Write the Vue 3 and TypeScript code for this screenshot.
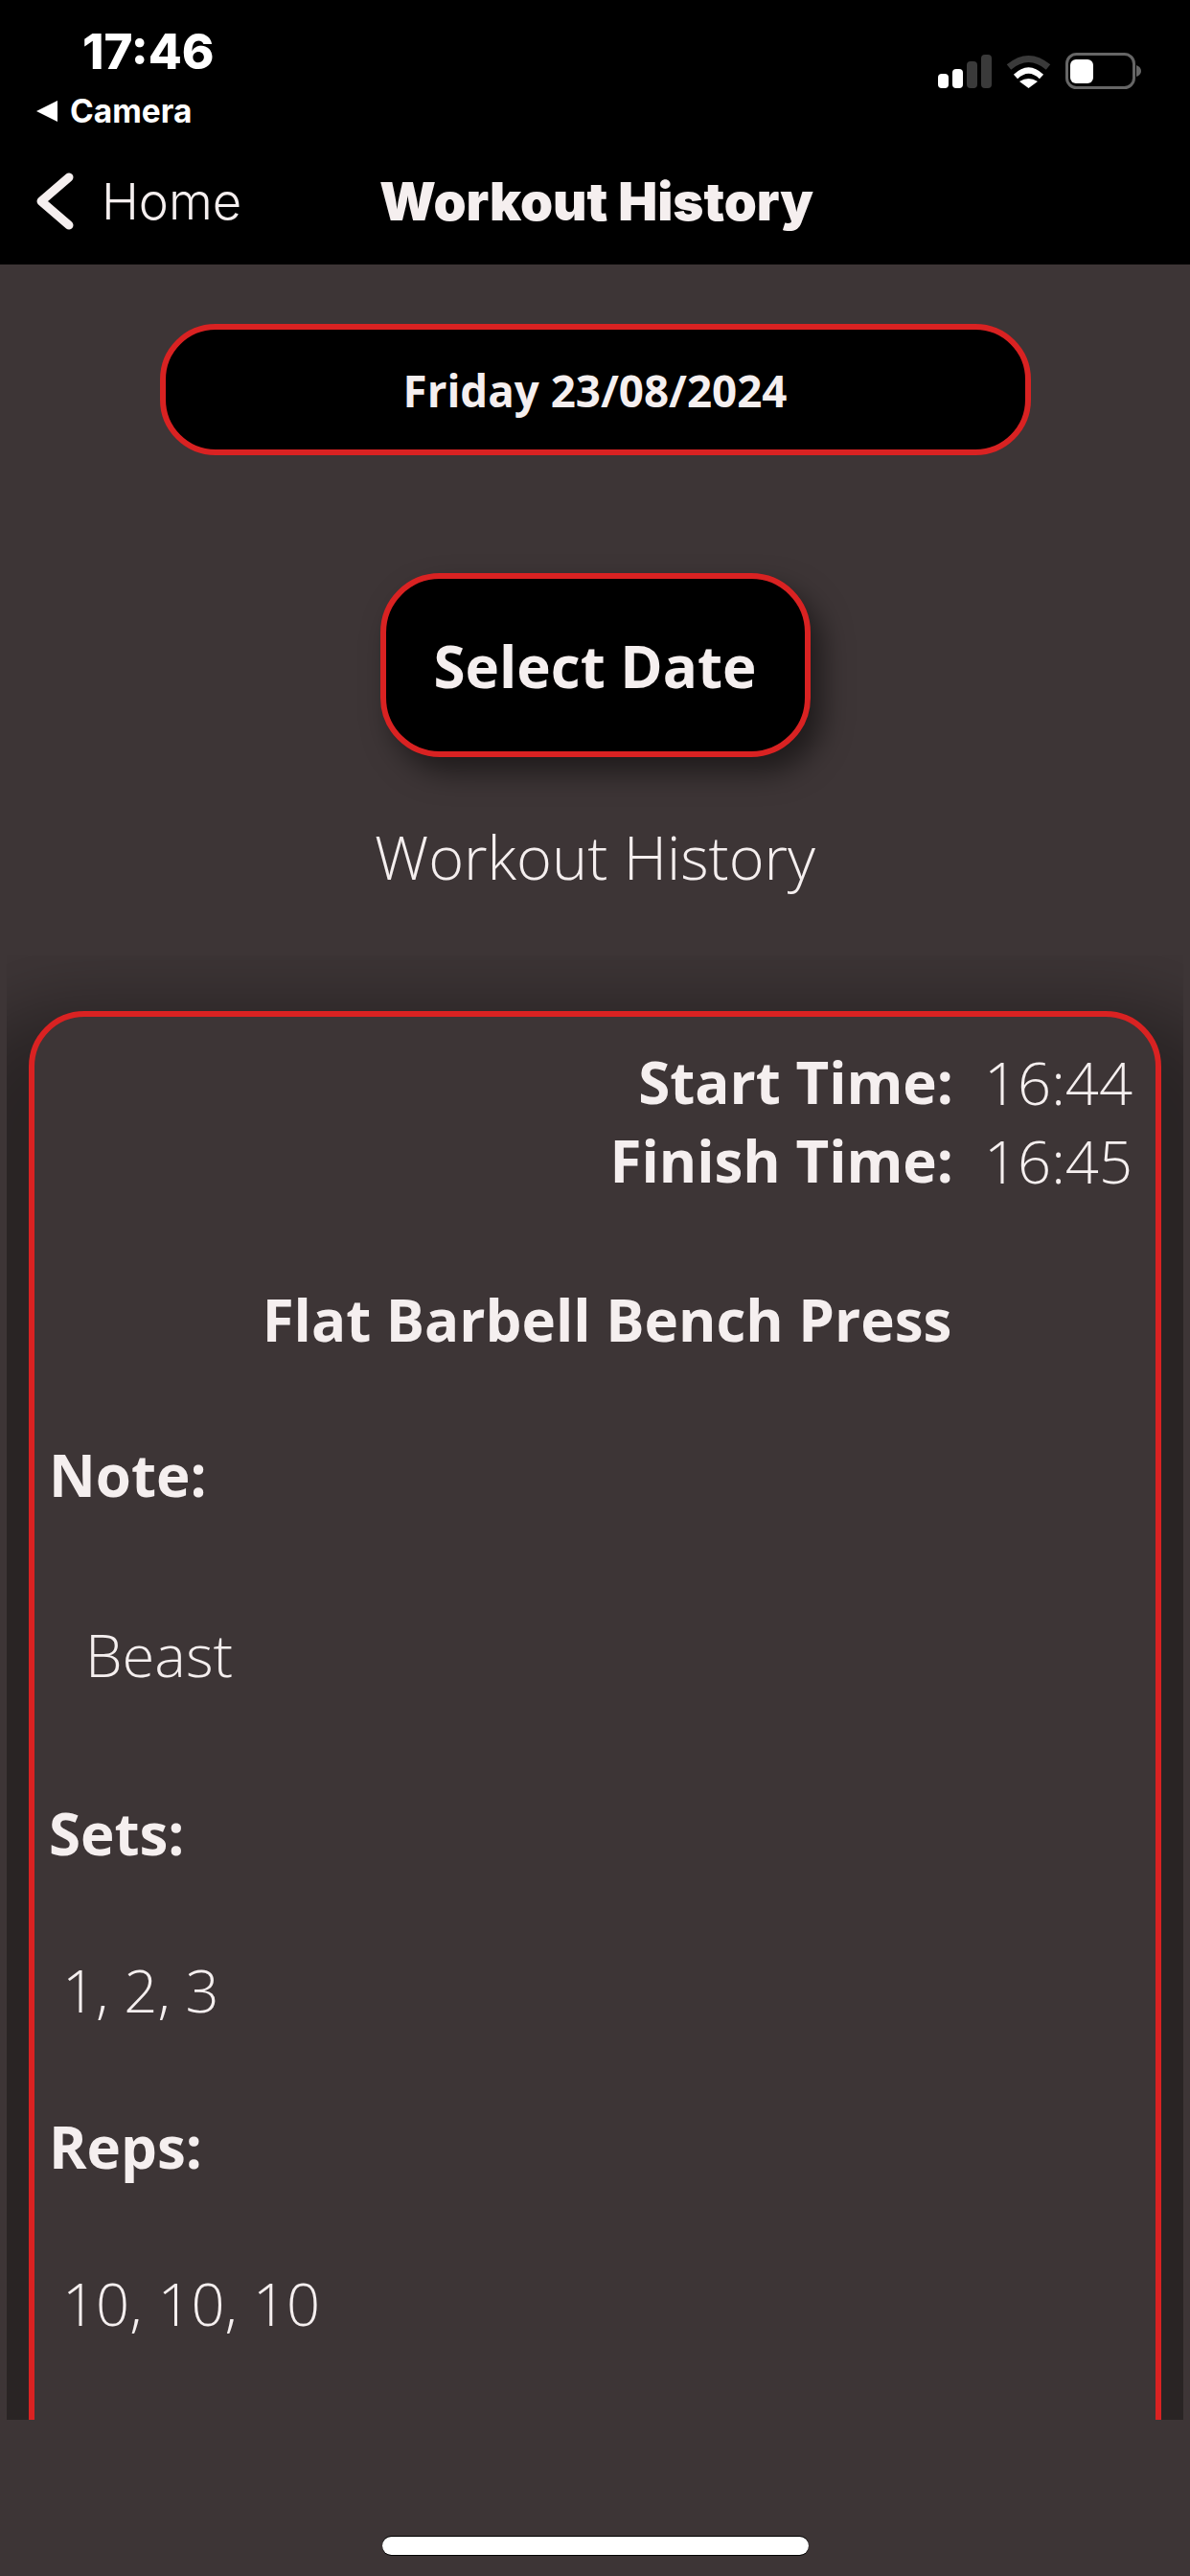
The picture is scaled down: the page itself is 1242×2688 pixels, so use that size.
<script setup lang="ts">
const sections = [
  { label: 'Note:', value: 'Beast', cls: 'beast' },
  { label: 'Sets:', value: '1, 2, 3', cls: 'sets' },
  { label: 'Reps:', value: '10, 10, 10', cls: 'reps' },
]
</script>

<template>
  <div class="page">
    <header class="top">
      <div class="status">
        <div class="status-left">
          <div class="clock">17:46</div>
          <div class="crumb"><span class="tri"></span>Camera</div>
        </div>
        <svg class="status-icons" width="214" height="42" viewBox="0 0 214 42">
          <rect x="0" y="24" width="11" height="15" rx="4" fill="#fff" />
          <rect x="15" y="19" width="11" height="20" rx="4" fill="#fff" />
          <rect x="30" y="11" width="11" height="28" rx="4" fill="#3a3a3a" />
          <rect x="45" y="4" width="11" height="35" rx="4" fill="#3a3a3a" />
          <path d="M74 17 Q94.500 0 115 17" fill="none" stroke="#3a3a3a" stroke-width="7" />
          <path d="M81 27 Q94.500 14 108 27" fill="none" stroke="#fff" stroke-width="6" />
          <path d="M94.500 39 L85 32 Q94.500 26 104 32 Z" fill="#fff" />
          <rect x="134.500" y="3.500" width="70" height="35" rx="10" fill="none" stroke="#666" stroke-width="3" />
          <rect x="138" y="9" width="24" height="25" rx="6" fill="#fff" />
          <path d="M207 15 Q212 17 212 21 Q212 25 207 27 Z" fill="#666" />
        </svg>
      </div>
      <nav class="nav">
        <div class="back">
          <svg width="42" height="62" viewBox="0 0 42 62">
            <path d="M36 6 L7 31 L36 56" fill="none" stroke="#f5efef" stroke-width="9" stroke-linecap="round" stroke-linejoin="round" />
          </svg>
          <span class="home">Home</span>
        </div>
        <h1 class="title">Workout History</h1>
      </nav>
    </header>

    <main class="content">
      <div class="date-box">Friday 23/08/2024</div>
      <button class="select" type="button">Select Date</button>
      <div class="heading">Workout History</div>

      <div class="viewport">
        <section class="card">
          <div class="times">
            <div class="time-row"><b>Start Time:</b><span>16:44</span></div>
            <div class="time-row"><b>Finish Time:</b><span>16:45</span></div>
          </div>
          <h2 class="exercise">Flat Barbell Bench Press</h2>
          <div v-for="s in sections" :key="s.label" class="group" :class="s.cls">
            <div class="label">{{ s.label }}</div>
            <div class="value">{{ s.value }}</div>
          </div>
        </section>
      </div>

      <div class="home-bar"></div>
    </main>
  </div>
</template>

<style>
html, body { margin: 0; background: #3d3536; }
</style>

<style scoped>
.page {
  width: 1242px;
  height: 2688px;
  display: flex;
  flex-direction: column;
  background: #3d3536;
  color: #f5efef;
  font-family: "Open Sans", "Liberation Sans", sans-serif;
  overflow: hidden;
}
.top {
  height: 276px;
  flex: none;
  background: #000;
  box-sizing: border-box;
  padding: 26px 0 0 36px;
}
.status {
  display: flex;
  justify-content: space-between;
  height: 110px;
}
.clock {
  font-family: Inter, sans-serif;
  font-weight: 800;
  font-size: 51px;
  line-height: 56px;
  color: #fff;
  margin-left: 50px;
}
.crumb {
  display: flex;
  align-items: center;
  font-family: Inter, sans-serif;
  font-weight: 700;
  font-size: 33.5px;
  line-height: 40px;
  color: #fff;
  margin-top: 14px;
}
.tri {
  width: 0;
  height: 0;
  border-top: 11px solid transparent;
  border-bottom: 11px solid transparent;
  border-right: 22px solid #fff;
  margin: 0 13px 0 2px;
}
.status-icons {
  margin: 27px 49px 0 0;
}
.nav {
  display: flex;
  align-items: center;
  height: 80px;
  margin-top: 34px;
  position: relative;
}
.back {
  display: flex;
  align-items: center;
  gap: 28px;
}
.home {
  font-family: Inter, sans-serif;
  font-weight: 300;
  font-size: 52.5px;
}
.title {
  margin: 0;
  position: absolute;
  left: 360px;
  top: 8px;
  font-family: Inter, sans-serif;
  font-weight: 900;
  font-size: 54.6px;
  line-height: 64px;
  white-space: nowrap;
}
.content {
  flex: 1;
  display: flex;
  flex-direction: column;
  align-items: center;
  padding-top: 62px;
  min-height: 0;
}
.date-box {
  width: 909px;
  height: 137px;
  box-sizing: border-box;
  border: 6px solid #d92222;
  border-radius: 58px;
  background: #000;
  display: flex;
  align-items: center;
  justify-content: center;
  font-weight: 700;
  font-size: 45.7px;
}
.select {
  width: 449px;
  height: 192px;
  margin-top: 123px;
  padding: 2px 0 0;
  box-sizing: border-box;
  border: 6px solid #d92222;
  border-radius: 62px;
  background: #000;
  color: #f5efef;
  font-family: inherit;
  font-weight: 700;
  font-size: 60px;
  box-shadow: 12px 16px 30px rgba(0, 0, 0, 0.5);
}
.heading {
  margin-top: 62px;
  font-weight: 300;
  font-size: 63px;
  line-height: 84px;
}
.viewport {
  align-self: stretch;
  margin: 61px 7px 0;
  height: 1528px;
  flex: none;
  overflow: hidden;
  padding: 58px 23px 0;
  box-sizing: border-box;
}
.card {
  box-sizing: border-box;
  border: 6px solid #d92222;
  border-radius: 58px;
  background: #3d3536;
  min-height: 1700px;
  box-shadow: 0 90px 76px 100px rgba(0, 0, 0, 0.32);
  padding: 27px 24px 0 15px;
}
.time-row {
  display: flex;
  justify-content: flex-end;
  font-size: 60px;
  line-height: 82px;
  gap: 32px;
}
.time-row b { font-weight: 700; }
.time-row span { font-weight: 330; font-size: 61.5px; }
.exercise {
  margin: 84px 0 0 34px;
  text-align: center;
  font-weight: 700;
  font-size: 60px;
  line-height: 82px;
}
.group { font-size: 60px; line-height: 82px; }
.label { font-weight: 700; }
.value { font-weight: 330; font-size: 61.5px; }
.beast { margin-top: 80px; }
.beast .value { margin: 105px 0 0 38px; }
.sets { margin-top: 105px; }
.sets .value { margin: 81px 0 0 14px; }
.reps { margin-top: 82px; }
.reps .value { margin: 81px 0 0 14px; }
.home-bar {
  width: 445px;
  height: 19px;
  border-radius: 10px;
  background: #fff;
  box-shadow: 0 -1px 0 #000, 0 1px 0 #000;
  margin-top: 122px;
  flex: none;
}
</style>
